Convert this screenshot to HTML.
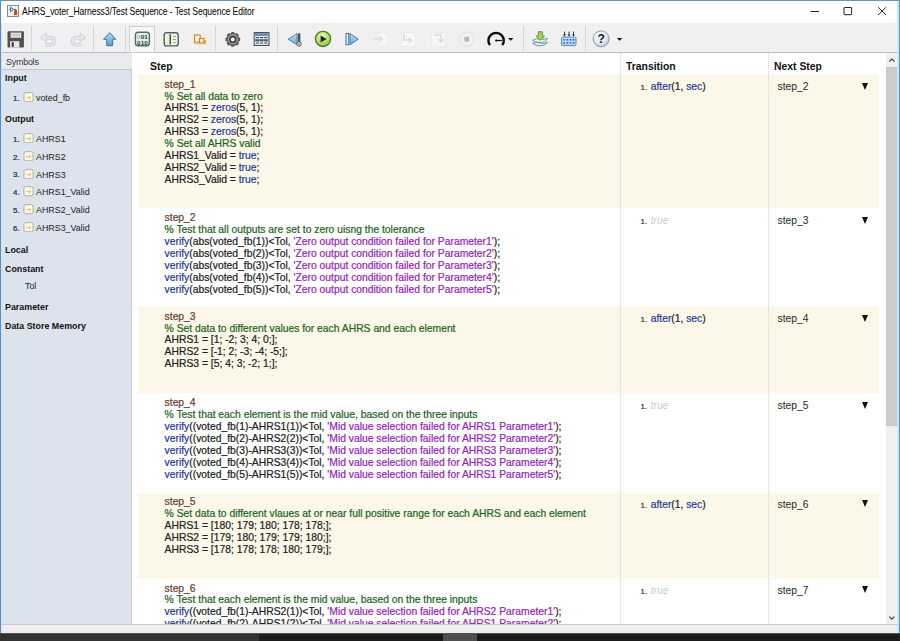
<!DOCTYPE html>
<html><head><meta charset="utf-8"><title>Test Sequence Editor</title>
<style>
*{box-sizing:border-box}
html,body{margin:0;padding:0}
body{width:900px;height:641px;overflow:hidden;position:relative;background:#fff;font-family:"Liberation Sans",Arial,sans-serif;color:#111}
.abs{position:absolute}
#win{position:absolute;left:0;top:0;width:900px;height:634px;background:#fff;overflow:hidden}
#bt{left:0;top:0;width:900px;height:1px;background:#6b93b8}
#bl{left:0;top:0;width:1px;height:633px;background:#5d8ebb}
#bl2{left:1px;top:23px;width:1px;height:610px;background:#cfe3f3}
#br{left:897px;top:1px;width:3px;height:632px;background:#cfe5f5;border-right:1px solid #5f8fbc}
#title{left:22px;top:5px;font-size:10.2px;line-height:14px;white-space:pre;color:#000;letter-spacing:-0.09px;transform-origin:0 0;transform:scaleX(0.84)}
#toolbar{left:1px;top:23px;width:896px;height:30px;background:#f0f0f0;border-bottom:1px solid #bdbdbd}
.sep{position:absolute;top:3px;width:1px;height:24px;background:#c9c9c9}
#side{left:2px;top:53px;width:130px;height:571px;background:#dde3ec;border-right:1px solid #c4ccd8}
#symh{left:0;top:0;width:130px;height:17px;background:#e9ebef;border-bottom:1px solid #c3c6cb;font-size:8.9px;line-height:19px;padding-left:4px;color:#333;letter-spacing:-0.2px}
.sh{position:absolute;left:3px;font-size:8.9px;font-weight:bold;line-height:12px;color:#111;white-space:pre}
.si{position:absolute;left:34px;font-size:8.9px;line-height:12px;color:#222;white-space:pre}
.sn{position:absolute;left:11px;margin-top:0.8px;font-size:8px;line-height:12px;color:#2a2a2a;-webkit-text-stroke:0.2px;white-space:pre}
.sic{position:absolute;left:20.6px;width:11px;height:10.4px}
#main{left:132px;top:53px;width:754px;height:571px;background:#fff;overflow:hidden}
.hd{position:absolute;top:7.9px;font-size:10.4px;font-weight:bold;line-height:12px;color:#111;white-space:pre}
.row{position:absolute;left:5.6px;width:741px}
.cream{background:#fcf8e9}
.code{position:absolute;left:27px;top:3.4px;font-size:10.33px;line-height:11.88px;white-space:pre;color:#222;-webkit-text-stroke:0.22px}
.c{color:#1d651d}.k{color:#1f3a98}.s{color:#9426ba}.n{color:#6a4030}
.tr{position:absolute;left:503px;top:5.7px;font-size:10.3px;line-height:12px;white-space:pre;color:#222;-webkit-text-stroke:0.2px}
.tr i{font-style:normal;font-size:7.8px;color:#333;margin-right:3.6px}
.tr em{color:#c9ccd4;-webkit-text-stroke:0}
.ns{position:absolute;left:640px;top:5.7px;font-size:10.3px;line-height:12px;white-space:pre;color:#262626}
.dd{position:absolute;left:724.6px;top:8.5px;width:0;height:0;border-left:3.7px solid transparent;border-right:3.7px solid transparent;border-top:7px solid #111}
.vl{position:absolute;top:0;width:0;height:571px;border-left:1px dotted #d2d2d2}
#sb{left:886px;top:53px;width:11px;height:571px;background:#f0f0f0}
#thumb{left:0;top:14px;width:11px;height:359px;background:#cbcbcb}
#status{left:1px;top:624px;width:896px;height:9px;background:#eeeeee;border-top:1px solid #c6c8cc}
#task{left:0;top:633.3px;width:900px;height:8px;background:#1b1b1b;border-top:0.5px solid #555}
</style></head><body>
<div id="win">
<div class="abs" id="title">AHRS_voter_Harness3/Test Sequence - Test Sequence Editor</div>
<div class="abs" id="toolbar"></div>
<svg class="abs" id="tb" style="left:0;top:0" width="900" height="54" viewBox="0 0 900 54">
<defs>
<linearGradient id="gUp" x1="0" y1="0" x2="0" y2="1"><stop offset="0" stop-color="#b9daf0"/><stop offset="1" stop-color="#5f9bc9"/></linearGradient>
<radialGradient id="gPlay" cx="0.45" cy="0.3" r="0.75"><stop offset="0" stop-color="#e4f6bc"/><stop offset="0.55" stop-color="#b4de72"/><stop offset="1" stop-color="#86ba42"/></radialGradient>
<radialGradient id="gHelp" cx="0.38" cy="0.28" r="0.85"><stop offset="0" stop-color="#ffffff"/><stop offset="0.5" stop-color="#e6edf4"/><stop offset="1" stop-color="#a9bacb"/></radialGradient>
<linearGradient id="gTri" x1="0" y1="0" x2="0" y2="1"><stop offset="0" stop-color="#c4dcf0"/><stop offset="1" stop-color="#76a8d4"/></linearGradient>
</defs>
<!-- title icon -->
<g id="ticon">
<rect x="7.5" y="5.5" width="11" height="11" fill="#f4f4f4" stroke="#8a8a8a"/>
<path d="M9.2 9.3h1.6M10.6 7.2v4.4l3-2.2z" fill="#e8f0fa" stroke="#1f5a9a" stroke-width="0.9"/>
<path d="M13.6 9.4h2.4v2" fill="none" stroke="#555" stroke-width="0.8"/>
<rect x="14" y="11.6" width="3.2" height="3.6" fill="#d04818"/>
<rect x="14.8" y="10.4" width="1.6" height="1.6" fill="none" stroke="#b03a10" stroke-width="0.7"/>
</g>
<!-- window controls -->
<g stroke="#222" stroke-width="1" fill="none">
<path d="M810.5 11.5h8.5"/>
<rect x="844" y="7.5" width="7.6" height="7.2" rx="0.6"/>
<path d="M878.3 7.3l7.6 7.6M885.9 7.3l-7.6 7.6"/>
</g>
<!-- separators -->
<g stroke="#d6d6d6" stroke-width="1">
<path d="M31.5 26v25M93.5 26v25M125.5 26v25M215.5 26v25M277.5 26v25M523.5 26v25M585.5 26v25"/>
</g>
<!-- selected button -->
<rect x="129.5" y="26.5" width="25" height="26" fill="#f6f6f6" stroke="#cfcfcf"/>
<!-- save -->
<g id="save">
<rect x="7.5" y="31.3" width="16.4" height="16.3" rx="1" fill="#505050"/>
<rect x="10.6" y="32.6" width="10.6" height="5.2" fill="#f2f2f2"/>
<path d="M11.6 34.2h8.4M11.6 36h8.4" stroke="#9a9a9a" stroke-width="0.7"/>
<rect x="10" y="41.2" width="9.4" height="6.4" fill="#e8e8e8"/>
<rect x="11.6" y="42.2" width="2.2" height="4.6" fill="#3a3a3a"/>
</g>
<!-- undo (disabled) -->
<g id="undo" fill="none" stroke-linejoin="round">
<path d="M45.6 37.7h5.2a3.5 3.5 0 0 1 0 7h-5.6" stroke="#c9d1d9" stroke-width="3.5"/>
<path d="M46.4 33.1l-5.8 4.5 5.8 4.5z" fill="#e6eaee" stroke="#c9d1d9" stroke-width="1"/>
<path d="M45.6 37.7h5.2a3.5 3.5 0 0 1 0 7h-5.6" stroke="#e9edf1" stroke-width="1.5"/>
</g>
<!-- redo (disabled) -->
<g id="redo" fill="none" stroke-linejoin="round">
<path d="M80.9 37.7h-5.2a3.5 3.5 0 0 0 0 7h5.6" stroke="#c9d1d9" stroke-width="3.5"/>
<path d="M80.1 33.1l5.8 4.5-5.8 4.5z" fill="#e6eaee" stroke="#c9d1d9" stroke-width="1"/>
<path d="M80.9 37.7h-5.2a3.5 3.5 0 0 0 0 7h5.6" stroke="#e9edf1" stroke-width="1.5"/>
</g>
<!-- up arrow -->
<path d="M109.7 32.6l6.2 6.7h-3.2v6.4h-6v-6.4h-3.2z" fill="url(#gUp)" stroke="#3a6c9a" stroke-width="0.9" stroke-linejoin="round"/>
<!-- 010 icon -->
<g id="bin">
<rect x="135.4" y="32.2" width="14" height="13.6" rx="2.8" fill="#e2f1e0" stroke="#4b6f6c" stroke-width="1.4"/>
<g font-family="Liberation Sans, sans-serif" font-size="6.2" font-weight="bold" fill="#27393a" text-anchor="middle">
<text x="138.7" y="38.7" fill="#9fb4b0">0</text><text x="142.4" y="38.7">0</text><text x="146" y="38.7">1</text>
<text x="138.7" y="44.5">0</text><text x="142.4" y="44.5">1</text><text x="146" y="44.5">0</text>
</g>
</g>
<!-- panel icon -->
<g id="panel">
<rect x="164.2" y="32.7" width="14" height="13.2" rx="2.4" fill="#f7faf0" stroke="#4a5f5e" stroke-width="1.4"/>
<rect x="165.2" y="33.7" width="4.4" height="11.2" fill="#eef4d8"/>
<path d="M170.2 34.2v10.4" stroke="#27332c" stroke-width="1.3"/>
<path d="M172.6 36.4h3.6" stroke="#8a8f8a" stroke-width="0.9"/><path d="M172.6 39.6h3.6M172.6 42.6h3.6" stroke="#86a45c" stroke-width="0.9"/>
</g>
<!-- orange icon -->
<g id="org">
<rect x="193" y="33.6" width="14" height="10.6" rx="2" fill="#fbe9d2" opacity="0.8"/>
<rect x="194.6" y="35" width="5.6" height="7.2" fill="#fdf3e4" stroke="#c27a34" stroke-width="1"/>
<rect x="199.4" y="38.4" width="4.6" height="4.6" fill="#fce6c8" stroke="#c27a34" stroke-width="1"/>
<rect x="203.6" y="40.6" width="2.4" height="2.6" fill="#e89548"/>
<path d="M194 43.8h12.4" stroke="#f3b06a" stroke-width="1"/>
</g>
<!-- gear -->
<g id="gear" transform="translate(232.8 39.4)">
<g fill="#5a5a5a">
<circle r="6.3"/>
<rect x="-1.8" y="-7.4" width="3.6" height="14.8" rx="1"/>
<rect x="-1.8" y="-7.4" width="3.6" height="14.8" rx="1" transform="rotate(45)"/>
<rect x="-1.8" y="-7.4" width="3.6" height="14.8" rx="1" transform="rotate(90)"/>
<rect x="-1.8" y="-7.4" width="3.6" height="14.8" rx="1" transform="rotate(135)"/>
</g>
<circle r="5.1" fill="#9c9c9c"/>
<circle r="3.7" fill="#3e3e3e"/>
<circle r="2" fill="#f6f6f6"/>
</g>
<!-- table icon -->
<g id="tbl">
<rect x="254.2" y="32.6" width="14.8" height="12.8" fill="#eef2f6" stroke="#34424f" stroke-width="1"/>
<rect x="254.7" y="33.1" width="13.8" height="3" fill="#6f8fae"/>
<rect x="254.7" y="38.9" width="13.8" height="2.7" fill="#8795a3"/>
<path d="M255.8 37.6h11.8M255.8 40.2h11.8M255.8 43h11.8" stroke="#2f3a46" stroke-width="1" stroke-dasharray="3.2 1"/>
</g>
<!-- step back -->
<g id="sback">
<path d="M297 33.6v11.2l-8.8-5.6z" fill="url(#gTri)" stroke="#3b74a8" stroke-width="0.9" stroke-linejoin="round"/>
<rect x="297.8" y="33.4" width="2.6" height="10" fill="#4a5560"/>
<circle cx="298.9" cy="44" r="2.3" fill="#e8e8e8" stroke="#555" stroke-width="0.9"/>
<circle cx="298.9" cy="44" r="0.8" fill="#444"/>
</g>
<!-- play -->
<g id="play">
<circle cx="323" cy="38.9" r="7.6" fill="url(#gPlay)" stroke="#4d7c26" stroke-width="1.3"/>
<path d="M320.6 35.4l6 3.5-6 3.5z" fill="#1c2c14"/>
</g>
<!-- step fwd -->
<g id="sfwd">
<rect x="346" y="33.4" width="2.8" height="11.4" fill="#e4eef8" stroke="#2f5f92" stroke-width="0.9"/>
<path d="M350 33.6v11.2l8.2-5.6z" fill="url(#gTri)" stroke="#3b74a8" stroke-width="0.9" stroke-linejoin="round"/>
</g>
<!-- disabled icons -->
<g id="dis">
<g fill="#f6f7f6" stroke="#e0e3e0" stroke-width="0.8" stroke-dasharray="1.2 0.8">
<rect x="378" y="32.4" width="9.6" height="13.8"/>
<rect x="401.5" y="32.4" width="14" height="13.8"/>
<rect x="431.5" y="32.4" width="14" height="13.8"/>
</g>
<g fill="none" stroke="#d3e2d1" stroke-width="1.6">
<path d="M373 39h8M379 36l3 3-3 3"/>
<path d="M404 34v6h7M408.5 37.5l3 2.8-3 2.8"/>
<path d="M434 35h7v6M438 39l3 3 3-3"/>
</g>
</g>
<!-- stop disabled -->
<g id="stop">
<circle cx="466.7" cy="39.2" r="7.3" fill="#f1f1f1" stroke="#e0e0e0" stroke-width="1"/>
<rect x="464.4" y="36.9" width="4.6" height="4.6" fill="#b4b4b4"/>
</g>
<!-- gauge -->
<g id="gauge" fill="none" stroke="#0c0c0c">
<path d="M489.9 45.1a7.7 7.7 0 1 1 12.4 0" stroke-width="2.4" stroke-linecap="butt"/>
<path d="M496 40.5h6" stroke-width="1.2"/>
<circle cx="496.2" cy="40.5" r="1.1" fill="#0c0c0c" stroke="none"/>
</g>
<path d="M508 38h5.4l-2.7 2.8z" fill="#111"/>
<!-- green arrow layers -->
<g id="imp">
<path d="M532.6 43.4q3.6-1.6 7.4-0.4t7.6-0.6q-3 3.6-7.6 3.4t-7.4-2.400z" fill="#f4f8fa" stroke="#5d8c9c" stroke-width="0.9" stroke-linejoin="round"/>
<path d="M532.6 40.4q3.400-2.400 7.400-1.400t7.600-0.600q-2.600 4.200-7.600 4t-7.400-2z" fill="#fafcfd" stroke="#5d8c9c" stroke-width="0.9" stroke-linejoin="round"/>
<path d="M538.3 31.700h4v4.300h2.200l-4.200 4.500-4.200-4.500h2.200z" fill="#a6d25c" stroke="#5f9428" stroke-width="0.9" stroke-linejoin="round"/>
</g>
<!-- calendar -->
<g id="cal">
<rect x="561.6" y="37" width="14.4" height="8.600" rx="1.400" fill="#bcdaf2" stroke="#4c8aca" stroke-width="1"/>
<path d="M564.5 31.600v4M569 31.600v4M573.5 31.600v4" stroke="#26344e" stroke-width="1"/>
<path d="M563 34.400l1.500 2.200 1.500-2.200zM567.5 34.400l1.500 2.200 1.500-2.200zM572 34.400l1.500 2.200 1.500-2.200z" fill="#26344e"/>
<path d="M563.400 39.800h11.600M563.400 42.900h11.600" stroke="#2f66a8" stroke-width="1.500" stroke-dasharray="1.700 1.400"/>
</g>
<!-- help -->
<g id="help">
<circle cx="601.1" cy="38.9" r="8" fill="url(#gHelp)" stroke="#8b9cae" stroke-width="1"/>
<text x="601.2" y="43.100" font-family="Liberation Sans, sans-serif" font-weight="bold" font-size="12" fill="#15151f" text-anchor="middle">?</text>
</g>
<path d="M616.900 38h5.400l-2.700 2.700z" fill="#111"/>
</svg>

<div class="abs" id="side">
 <div class="abs" id="symh">Symbols</div>
 <div class="sh" style="top:19px">Input</div>
 <div class="sn" style="top:39px">1.</div><svg class="sic" style="top:39px" viewBox="0 0 10 10"><rect x="0.6" y="0.6" width="8.8" height="8.8" rx="1.6" fill="#f8f8e4" stroke="#a9ad98" stroke-width="0.9"/><path d="M2.6 5.4h4.4M5.6 4l1.6 1.4-1.6 1.4" fill="none" stroke="#d4b468" stroke-width="0.7"/></svg><div class="si" style="top:39px">voted_fb</div>
 <div class="sh" style="top:60px">Output</div>
 <div class="sn" style="top:80px">1.</div><svg class="sic" style="top:80px" viewBox="0 0 10 10"><rect x="0.6" y="0.6" width="8.8" height="8.8" rx="1.6" fill="#f8f8e4" stroke="#a9ad98" stroke-width="0.9"/><path d="M2.6 5.4h4.4M5.6 4l1.6 1.4-1.6 1.4" fill="none" stroke="#d4b468" stroke-width="0.7"/></svg><div class="si" style="top:80px">AHRS1</div>
 <div class="sn" style="top:97.8px">2.</div><svg class="sic" style="top:97.8px" viewBox="0 0 10 10"><rect x="0.6" y="0.6" width="8.8" height="8.8" rx="1.6" fill="#f8f8e4" stroke="#a9ad98" stroke-width="0.9"/><path d="M2.6 5.4h4.4M5.6 4l1.6 1.4-1.6 1.4" fill="none" stroke="#d4b468" stroke-width="0.7"/></svg><div class="si" style="top:97.8px">AHRS2</div>
 <div class="sn" style="top:115.6px">3.</div><svg class="sic" style="top:115.6px" viewBox="0 0 10 10"><rect x="0.6" y="0.6" width="8.8" height="8.8" rx="1.6" fill="#f8f8e4" stroke="#a9ad98" stroke-width="0.9"/><path d="M2.6 5.4h4.4M5.6 4l1.6 1.4-1.6 1.4" fill="none" stroke="#d4b468" stroke-width="0.7"/></svg><div class="si" style="top:115.6px">AHRS3</div>
 <div class="sn" style="top:133.4px">4.</div><svg class="sic" style="top:133.4px" viewBox="0 0 10 10"><rect x="0.6" y="0.6" width="8.8" height="8.8" rx="1.6" fill="#f8f8e4" stroke="#a9ad98" stroke-width="0.9"/><path d="M2.6 5.4h4.4M5.6 4l1.6 1.4-1.6 1.4" fill="none" stroke="#d4b468" stroke-width="0.7"/></svg><div class="si" style="top:133.4px">AHRS1_Valid</div>
 <div class="sn" style="top:151.2px">5.</div><svg class="sic" style="top:151.2px" viewBox="0 0 10 10"><rect x="0.6" y="0.6" width="8.8" height="8.8" rx="1.6" fill="#f8f8e4" stroke="#a9ad98" stroke-width="0.9"/><path d="M2.6 5.4h4.4M5.6 4l1.6 1.4-1.6 1.4" fill="none" stroke="#d4b468" stroke-width="0.7"/></svg><div class="si" style="top:151.2px">AHRS2_Valid</div>
 <div class="sn" style="top:169px">6.</div><svg class="sic" style="top:169px" viewBox="0 0 10 10"><rect x="0.6" y="0.6" width="8.8" height="8.8" rx="1.6" fill="#f8f8e4" stroke="#a9ad98" stroke-width="0.9"/><path d="M2.6 5.4h4.4M5.6 4l1.6 1.4-1.6 1.4" fill="none" stroke="#d4b468" stroke-width="0.7"/></svg><div class="si" style="top:169px">AHRS3_Valid</div>
 <div class="sh" style="top:191px">Local</div>
 <div class="sh" style="top:210px">Constant</div>
 <div class="si" style="top:227px;left:23px">Tol</div>
 <div class="sh" style="top:248.2px">Parameter</div>
 <div class="sh" style="top:267.4px">Data Store Memory</div>
</div>
<div class="abs" id="main">
 <div class="hd" style="left:18px">Step</div>
 <div class="hd" style="left:494px">Transition</div>
 <div class="hd" style="left:642px">Next Step</div>

 <div class="row cream" style="top:22.3px;height:132.7px">
  <div class="code" style="top:3.4px"><span class="n">step_1</span>
<span class="c">% Set all data to zero</span>
AHRS1 = <span class="k">zeros</span>(5, 1);
AHRS2 = <span class="k">zeros</span>(5, 1);
AHRS3 = <span class="k">zeros</span>(5, 1);
<span class="c">% Set all AHRS valid</span>
AHRS1_Valid = <span class="k">true</span>;
AHRS2_Valid = <span class="k">true</span>;
AHRS3_Valid = <span class="k">true</span>;</div>
  <div class="tr" style="top:5.5px"><i>1.</i><span class="k">after</span>(1, <span class="k">sec</span>)</div>
  <div class="ns" style="top:5.5px">step_2</div><div class="dd" style="top:7.4px"></div>
 </div>

 <div class="row" style="top:155px;height:98.5px">
  <div class="code" style="top:4.3px"><span class="n">step_2</span>
<span class="c">% Test that all outputs are set to zero uisng the tolerance</span>
<span class="k">verify</span>(abs(voted_fb(1))&lt;Tol, <span class="s">'Zero output condition failed for Parameter1'</span>);
<span class="k">verify</span>(abs(voted_fb(2))&lt;Tol, <span class="s">'Zero output condition failed for Parameter2'</span>);
<span class="k">verify</span>(abs(voted_fb(3))&lt;Tol, <span class="s">'Zero output condition failed for Parameter3'</span>);
<span class="k">verify</span>(abs(voted_fb(4))&lt;Tol, <span class="s">'Zero output condition failed for Parameter4'</span>);
<span class="k">verify</span>(abs(voted_fb(5))&lt;Tol, <span class="s">'Zero output condition failed for Parameter5'</span>);</div>
  <div class="tr" style="top:7.3px"><i>1.</i><em>true</em></div>
  <div class="ns" style="top:7.3px">step_3</div><div class="dd" style="top:8.5px"></div>
 </div>

 <div class="row cream" style="top:253.5px;height:86.3px">
  <div class="code" style="top:4.2px"><span class="n">step_3</span>
<span class="c">% Set data to different values for each AHRS and each element</span>
AHRS1 = [1; -2; 3; 4; 0;];
AHRS2 = [-1; 2; -3; -4; -5;];
AHRS3 = [5; 4; 3; -2; 1;];</div>
  <div class="tr" style="top:6.45px"><i>1.</i><span class="k">after</span>(1, <span class="k">sec</span>)</div>
  <div class="ns" style="top:6.45px">step_4</div><div class="dd" style="top:8.9px"></div>
 </div>

 <div class="row" style="top:339.8px;height:100.2px">
  <div class="code" style="top:4.6px"><span class="n">step_4</span>
<span class="c">% Test that each element is the mid value, based on the three inputs</span>
<span class="k">verify</span>((voted_fb(1)-AHRS1(1))&lt;Tol, <span class="s">'Mid value selection failed for AHRS1 Parameter1'</span>);
<span class="k">verify</span>((voted_fb(2)-AHRS2(2))&lt;Tol, <span class="s">'Mid value selection failed for AHRS2 Parameter2'</span>);
<span class="k">verify</span>((voted_fb(3)-AHRS3(3))&lt;Tol, <span class="s">'Mid value selection failed for AHRS3 Parameter3'</span>);
<span class="k">verify</span>((voted_fb(4)-AHRS3(4))&lt;Tol, <span class="s">'Mid value selection failed for AHRS3 Parameter4'</span>);
<span class="k">verify</span>((voted_fb(5)-AHRS1(5))&lt;Tol, <span class="s">'Mid value selection failed for AHRS1 Parameter5'</span>);</div>
  <div class="tr" style="top:7.6px"><i>1.</i><em>true</em></div>
  <div class="ns" style="top:7.6px">step_5</div><div class="dd" style="top:9.6px"></div>
 </div>

 <div class="row cream" style="top:440px;height:86px">
  <div class="code" style="top:3.1px"><span class="n">step_5</span>
<span class="c">% Set data to different vlaues at or near full positive range for each AHRS and each element</span>
AHRS1 = [180; 179; 180; 178; 178;];
AHRS2 = [179; 180; 179; 179; 180;];
AHRS3 = [178; 178; 178; 180; 179;];</div>
  <div class="tr" style="top:5.7px"><i>1.</i><span class="k">after</span>(1, <span class="k">sec</span>)</div>
  <div class="ns" style="top:5.7px">step_6</div><div class="dd" style="top:7.4px"></div>
 </div>

 <div class="row" style="top:526px;height:60px">
  <div class="code" style="top:3.6px"><span class="n">step_6</span>
<span class="c">% Test that each element is the mid value, based on the three inputs</span>
<span class="k">verify</span>((voted_fb(1)-AHRS2(1))&lt;Tol, <span class="s">'Mid value selection failed for AHRS2 Parameter1'</span>);
<span class="k">verify</span>((voted_fb(2)-AHRS1(2))&lt;Tol, <span class="s">'Mid value selection failed for AHRS1 Parameter2'</span>);</div>
  <div class="tr" style="top:5.7px"><i>1.</i><em>true</em></div>
  <div class="ns" style="top:5.7px">step_7</div><div class="dd" style="top:7.4px"></div>
 </div>

 <div class="vl" style="left:488.4px"></div>
 <div class="vl" style="left:636px"></div>
</div>
<div class="abs" id="sb"><div class="abs" id="thumb"></div>
<svg class="abs" style="left:0;top:0" width="12" height="571" viewBox="0 0 12 571"><path d="M3.2 8.6l2.6-2.6 2.6 2.6M3.2 563.6l2.6 2.6 2.6-2.6" fill="none" stroke="#3a3a3a" stroke-width="1.1"/></svg></div>
<div class="abs" id="status"></div>
<div class="abs" id="bt"></div><div class="abs" id="bl"></div><div class="abs" id="bl2"></div><div class="abs" id="br"></div>
</div>
<div class="abs" id="task"><div class="abs" style="left:0;top:0;width:259px;height:8px;background:#323232"></div><div class="abs" style="left:442.5px;top:0;width:34.5px;height:8px;background:#4e4e4e"></div><div class="abs" style="left:278px;top:6.6px;width:5px;height:2px;background:#2f7fc4"></div><div class="abs" style="left:348px;top:6.6px;width:5px;height:2px;background:#3a8fd0"></div><div class="abs" style="left:382px;top:6.4px;width:8px;height:2px;background:#3aa0d8"></div><div class="abs" style="left:426px;top:6.4px;width:5px;height:2px;background:#d8a040"></div><div class="abs" style="left:10px;top:6.6px;width:6px;height:2px;background:#777;border-radius:2px 2px 0 0"></div></div>
</body></html>
